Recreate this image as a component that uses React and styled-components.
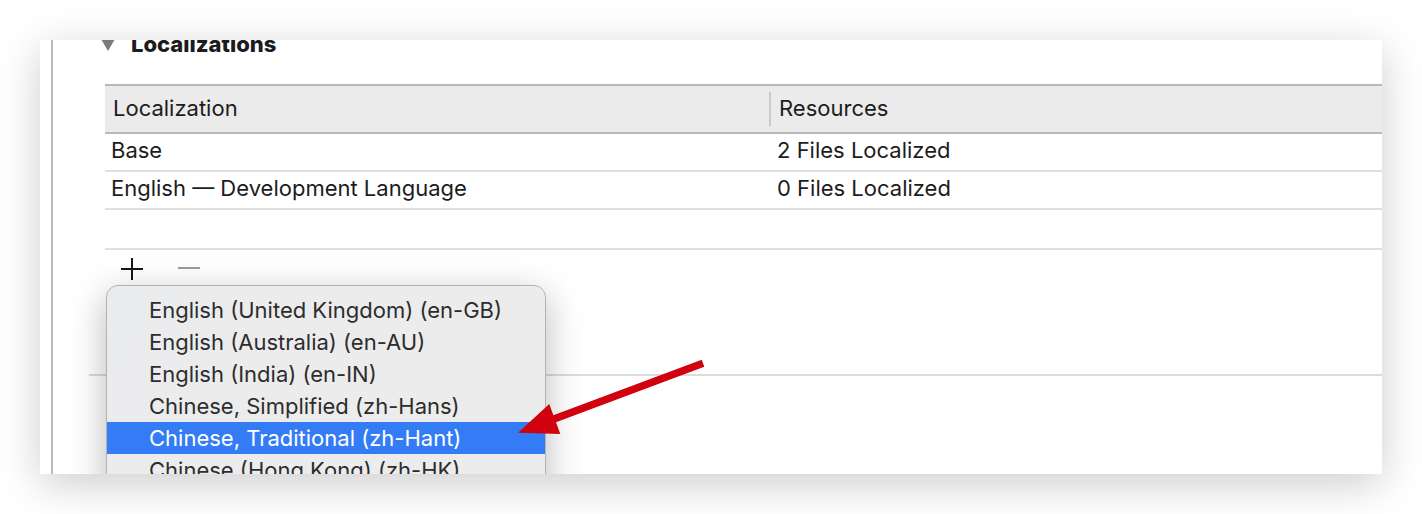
import React from "react";
import styled, { createGlobalStyle } from "styled-components";

const GlobalStyle = createGlobalStyle`
  *, *::before, *::after { box-sizing: border-box; }
  body {
    margin: 0;
    background: #fff;
    color: #1c1c1d;
    font: 400 22px/32px Inter, "Liberation Sans", sans-serif;
  }
`;

const Page = styled.main`
  display: flex;
  min-height: 100vh;
  padding: 40px;
  overflow: hidden;
`;

const Panel = styled.section`
  display: flex;
  flex: 1;
  min-width: 0;
  padding-left: 11px;
  overflow: hidden;
  background: #fff;
  box-shadow: 0 10px 40px rgba(0, 0, 0, 0.2);
`;

const Editor = styled.div`
  flex: 1;
  min-width: 0;
  padding-left: 36px;
  border-left: 2px solid #bcbcbc;
`;

const SectionTitle = styled.h2`
  display: flex;
  align-items: center;
  gap: 16px;
  margin: -12px 0 24px;
  padding-left: 12px;
  font-size: 22px;
  font-weight: 800;
  line-height: 32px;
`;

const SectionBody = styled.div`
  padding-left: 16px;
`;

const Table = styled.table`
  width: 100%;
  table-layout: fixed;
  border-collapse: separate;
  border-spacing: 0;
  text-align: left;
`;

const HeadCell = styled.th`
  width: ${(p) => p.$width};
  height: 50px;
  padding: 0;
  border: solid #b9b9b9;
  border-width: 2px 0;
  background: #ebebeb;
  font-weight: 400;
`;

const HeadLabel = styled.span`
  display: block;
  padding: 0 0 2px 8px;
  border-left: ${(p) => (p.$divided ? "2px solid #c9c9c9" : "0")};
`;

const Cell = styled.td`
  height: ${(p) => (p.$empty ? 40 : 38)}px;
  padding: 0 0 ${(p) => (p.$empty ? 0 : 4)}px ${(p) => (p.$second ? 8 : 6)}px;
  border-bottom: 2px solid #dfdfdf;
`;

const Toolbar = styled.div`
  position: relative;
  display: flex;
  align-items: flex-start;
  gap: 35px;
  height: 124px;
  padding: 8px 16px;
`;

const IconButton = styled.button`
  display: block;
  padding: 0;
  border: 0;
  background: none;
  color: #161616;
  &:disabled { color: #9c9c9c; }
  svg { display: block; }
`;

const Divider = styled.hr`
  margin: 0;
  border: 0;
  border-top: 2px solid #dcdcdc;
`;

const MenuLayer = styled.div`
  position: absolute;
  top: 35px;
  left: 1px;
`;

const Menu = styled.div`
  width: 440px;
  padding: 8px 0;
  border: 1px solid #b2b2b2;
  border-radius: 12px;
  background: linear-gradient(110deg, #eaebee 0, #ececec 140px);
  box-shadow: 0 10px 36px rgba(0, 0, 0, 0.28);
`;

const MenuItem = styled.button`
  display: block;
  width: 100%;
  height: 32px;
  padding: 0 0 0 42px;
  border: 0;
  background: ${(p) => (p.$active ? "#337cf6" : "transparent")};
  color: ${(p) => (p.$active ? "#fff" : "#2d2d2e")};
  font: inherit;
  text-align: left;
  white-space: nowrap;
`;

const Arrow = styled.svg`
  position: absolute;
  top: 74px;
  left: 411px;
  pointer-events: none;
`;

const rows = [
  ["Base", "2 Files Localized"],
  ["English — Development Language", "0 Files Localized"],
];

const languages = [
  "English (United Kingdom) (en-GB)",
  "English (Australia) (en-AU)",
  "English (India) (en-IN)",
  "Chinese, Simplified (zh-Hans)",
  "Chinese, Traditional (zh-Hant)",
  "Chinese (Hong Kong) (zh-HK)",
];

export default function App() {
  return (
    <>
      <GlobalStyle />
      <Page>
        <Panel>
          <Editor>
            <SectionTitle>
              <svg width="14" height="14" viewBox="0 0 14 14" aria-hidden="true">
                <path d="M0 2H14L7 14Z" fill="#7b7b7b" />
              </svg>
              Localizations
            </SectionTitle>
            <SectionBody>
              <Table>
                <thead>
                  <tr>
                    <HeadCell scope="col" $width="52%">
                      <HeadLabel>Localization</HeadLabel>
                    </HeadCell>
                    <HeadCell scope="col">
                      <HeadLabel $divided>Resources</HeadLabel>
                    </HeadCell>
                  </tr>
                </thead>
                <tbody>
                  {rows.map(([name, files]) => (
                    <tr key={name}>
                      <Cell>{name}</Cell>
                      <Cell $second>{files}</Cell>
                    </tr>
                  ))}
                  <tr>
                    <Cell $empty />
                    <Cell $empty />
                  </tr>
                </tbody>
              </Table>
              <Toolbar>
                <IconButton type="button" aria-label="Add localization" aria-haspopup="menu">
                  <svg width="22" height="22" viewBox="0 0 22 22">
                    <path d="M0 11H22M11 0V22" stroke="currentColor" strokeWidth="2" />
                  </svg>
                </IconButton>
                <IconButton type="button" aria-label="Remove localization" disabled>
                  <svg width="22" height="22" viewBox="0 0 22 22">
                    <path d="M0 10H22" stroke="currentColor" strokeWidth="2" />
                  </svg>
                </IconButton>
                <MenuLayer>
                  <Menu role="menu" aria-label="Languages">
                    {languages.map((name) => (
                      <MenuItem
                        key={name}
                        type="button"
                        role="menuitem"
                        $active={name.includes("Traditional")}
                      >
                        {name}
                      </MenuItem>
                    ))}
                  </Menu>
                  <Arrow width="188" height="76" viewBox="0 0 188 76" aria-hidden="true">
                    <path
                      d="M1 73.7L32.3 45L36.3 56.3L184.7 0.7L187.3 7.7L39 63.3L43.3 75Z"
                      fill="#d0020f"
                    />
                  </Arrow>
                </MenuLayer>
              </Toolbar>
            </SectionBody>
            <Divider />
          </Editor>
        </Panel>
      </Page>
    </>
  );
}
